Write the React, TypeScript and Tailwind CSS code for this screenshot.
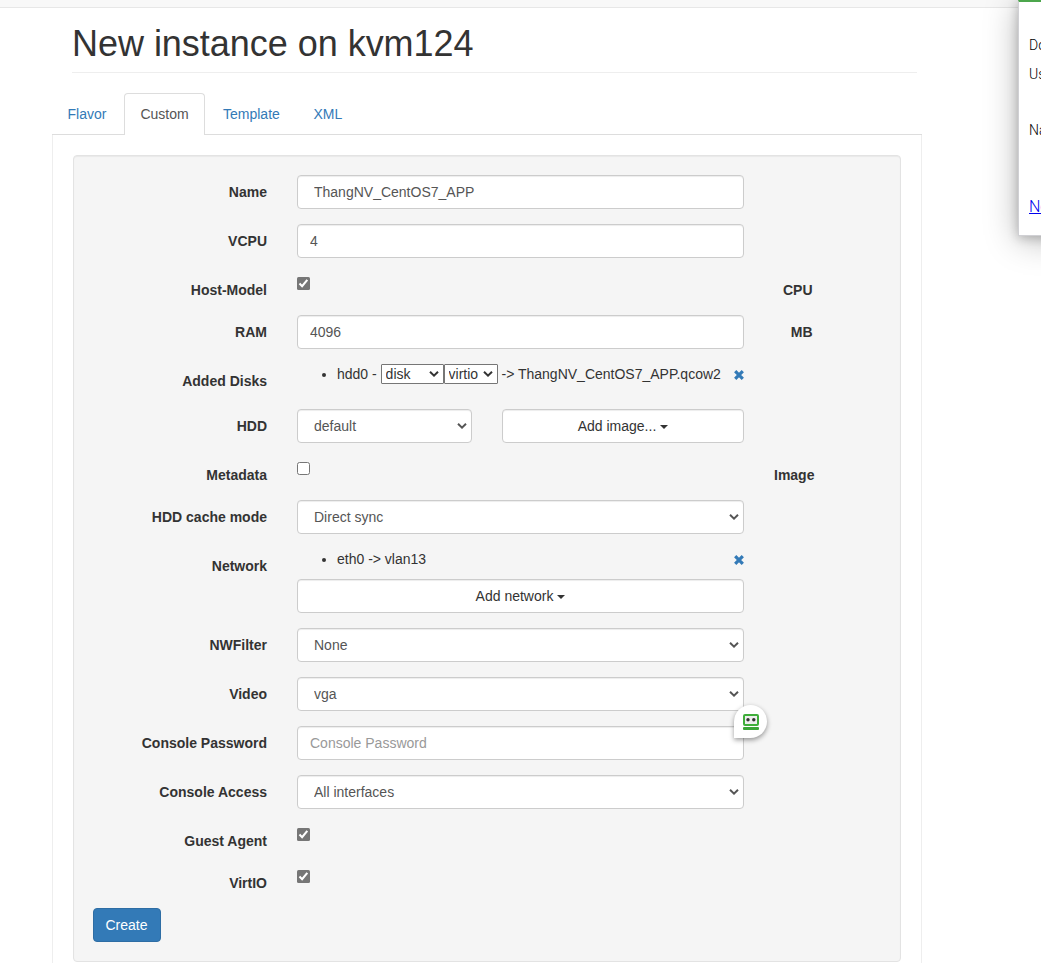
import type { ReactNode } from "react";

const control =
  "h-[34px] w-full rounded border border-[#ccc] bg-white text-sm text-[#555] shadow-[inset_0_1px_1px_rgba(0,0,0,0.075)] outline-none placeholder:text-[#999] placeholder:opacity-100";

function Chevron({ className = "" }: { className?: string }) {
  return (
    <svg viewBox="0 0 10 6" className={`pointer-events-none h-[6px] w-[10px] ${className}`} fill="none">
      <path d="M1 0.8 L5 4.6 L9 0.8" stroke="currentColor" strokeWidth="2" />
    </svg>
  );
}

function Select({ value }: { value: string }) {
  return (
    <div className="grid items-center text-[#555]">
      <select className={`${control} col-start-1 row-start-1 appearance-none pl-4`}>
        <option>{value}</option>
      </select>
      <Chevron className="col-start-1 row-start-1 mr-[5px] justify-self-end" />
    </div>
  );
}

function SmallSelect({ value, width }: { value: string; width: string }) {
  return (
    <span className={`inline-grid h-5 shrink-0 items-center text-[#333] ${width}`}>
      <select className="col-start-1 row-start-1 h-5 w-full appearance-none rounded-[1px] border border-[#767676] bg-white pl-1 text-sm leading-[18px] text-[#333] outline-none">
        <option>{value}</option>
      </select>
      <Chevron className="col-start-1 row-start-1 mr-[5px] justify-self-end" />
    </span>
  );
}

function Checkbox({ checked = false }: { checked?: boolean }) {
  return (
    <svg viewBox="0 0 13 13" className="mt-1 block h-[13px] w-[13px]" role="checkbox" aria-checked={checked}>
      {checked ? (
        <>
          <rect width="13" height="13" rx="1.5" fill="#767676" />
          <path d="M2.5 6.6 L5.1 9.2 L10.3 2.9" fill="none" stroke="#fff" strokeWidth="2.1" />
        </>
      ) : (
        <rect x="0.5" y="0.5" width="12" height="12" rx="2" fill="#fff" stroke="#767676" />
      )}
    </svg>
  );
}

function Row({ label, suffix, children }: { label: string; suffix?: string; children: ReactNode }) {
  return (
    <div className="mb-[15px] flex items-start">
      <label className="w-[174px] shrink-0 pt-[7px] text-right font-bold">{label}</label>
      <div className="ml-[30px] w-[447px] shrink-0">{children}</div>
      {suffix && <label className="ml-[30px] w-[38.5px] pt-[7px] text-right font-bold">{suffix}</label>}
    </div>
  );
}

function Remove() {
  return (
    <svg viewBox="0 0 10 10" className="mt-px ml-auto h-[10px] w-[10px] text-[#337ab7]">
      <path d="M1.2 1.2 L8.8 8.8 M8.8 1.2 L1.2 8.8" stroke="currentColor" strokeWidth="3.2" />
    </svg>
  );
}

function Item({ children }: { children: ReactNode }) {
  return (
    <div className="mb-[10px] flex h-5 items-center whitespace-pre">
      <span className="mt-px mr-[11px] ml-[25px] h-1 w-1 rounded-full bg-[#333]" />
      {children}
      <Remove />
    </div>
  );
}

function Dropdown({ label }: { label: string }) {
  return (
    <button className={`${control} flex items-center justify-center !text-[#333]`}>
      {label}
      <span className="mt-px ml-1 border-x-4 border-t-4 border-x-transparent border-t-[#333]" />
    </button>
  );
}

export default function App() {
  return (
    <div
      className="relative h-[963px] overflow-hidden bg-white text-sm leading-5 text-[#333]"
      style={{ fontFamily: '"Liberation Sans", Arial, sans-serif' }}
    >
      <div className="h-2 border-b border-[#e7e7e7] bg-[#f8f8f8]" />
      <h1 className="ml-[72px] h-[65px] w-[845px] border-b border-[#eee] pt-4 text-[36px] leading-[40px] font-medium -tracking-[0.03px]">
        New instance on kvm124
      </h1>
      <main className="ml-[52px] w-[870px] pt-5">
        <nav className="flex h-[42px] border-b border-[#ddd] text-[#337ab7]">
          <a className="mr-px w-[71px] pt-[11px] pl-[15.5px]">Flavor</a>
          <a className="h-[42px] w-[81px] shrink-0 rounded-t border border-b-0 border-[#ddd] bg-white pt-[10px] text-center text-[#555]">
            Custom
          </a>
          <a className="w-[90px] pt-[11px] pl-[18px]">Template</a>
          <a className="pt-[11px] pl-[18.5px]">XML</a>
        </nav>
        <div className="h-[840px] border-x border-[#eee] px-5 pt-5">
          <form className="h-[807px] rounded border border-[#e3e3e3] bg-[#f5f5f5] p-[19px] shadow-[inset_0_1px_1px_rgba(0,0,0,0.05)]">
            <Row label="Name">
              <input className={`${control} px-4`} defaultValue="ThangNV_CentOS7_APP" />
            </Row>
            <Row label="VCPU">
              <input className={`${control} px-3`} defaultValue="4" />
            </Row>
            <Row label="Host-Model" suffix="CPU">
              <Checkbox checked />
            </Row>
            <Row label="RAM" suffix="MB">
              <input className={`${control} px-3`} defaultValue="4096" />
            </Row>
            <Row label="Added Disks">
              <Item>
                {"hdd0 - "}
                <SmallSelect value="disk" width="w-[63px]" />
                <SmallSelect value="virtio" width="w-[54px]" />
                {" -> ThangNV_CentOS7_APP.qcow2"}
              </Item>
            </Row>
            <Row label="HDD">
              <div className="grid grid-cols-[175px_242px] gap-[30px]">
                <Select value="default" />
                <Dropdown label="Add image..." />
              </div>
            </Row>
            <Row label="Metadata" suffix="Image">
              <Checkbox />
            </Row>
            <Row label="HDD cache mode">
              <Select value="Direct sync" />
            </Row>
            <Row label="Network">
              <Item>{"eth0 -> vlan13"}</Item>
              <Dropdown label="Add network" />
            </Row>
            <Row label="NWFilter">
              <Select value="None" />
            </Row>
            <Row label="Video">
              <Select value="vga" />
            </Row>
            <Row label="Console Password">
              <input className={`${control} px-3`} placeholder="Console Password" />
            </Row>
            <Row label="Console Access">
              <Select value="All interfaces" />
            </Row>
            <Row label="Guest Agent">
              <Checkbox checked />
            </Row>
            <Row label="VirtIO">
              <Checkbox checked />
            </Row>
            <button className="h-[34px] w-[68px] rounded border border-[#2e6da4] bg-[#337ab7] pr-px text-white">
              Create
            </button>
          </form>
        </div>
      </main>

      <div className="absolute top-[705px] left-[734px] flex h-[33px] w-[33px] items-start rounded-full rounded-bl-none bg-white pt-[9px] pl-[9px] shadow-[0_2px_5px_rgba(0,0,0,0.4)]">
        <svg viewBox="0 0 16 16" className="h-4 w-4">
          <rect x="1" y="1" width="14" height="10" rx="1" fill="#eee" stroke="#3fae3a" strokeWidth="2" />
          <circle cx="5" cy="5.7" r="1.7" fill="#333" />
          <circle cx="10.8" cy="5.7" r="1.7" fill="#333" />
          <rect x="0" y="13" width="16" height="3" rx="1" fill="#3aa536" />
        </svg>
      </div>

      <aside
        className="absolute top-0 left-[1018px] h-[236px] w-[300px] border border-t-2 border-[#d0d0d4] border-t-[#4ca64c] bg-white pt-[33px] pl-[10px] text-sm shadow-[0_4px_32px_rgba(0,0,0,0.28),0_2px_10px_rgba(0,0,0,0.22)]"
        style={{ fontFamily: 'Roboto, sans-serif' }}
      >
        <div className="h-[29px] font-light text-black">Do</div>
        <div className="h-14 font-light text-black">Us</div>
        <div className="h-[77px] font-light text-black">Na</div>
        <a className="text-base leading-5 font-light text-[#0000ee] underline">Ne</a>
      </aside>
    </div>
  );
}
